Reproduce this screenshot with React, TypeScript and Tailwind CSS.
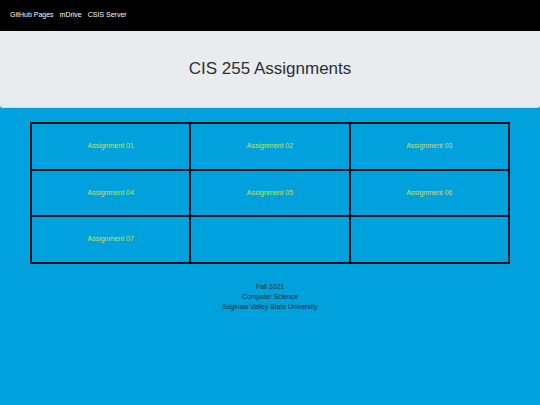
const assignments = [
  "Assignment 01",
  "Assignment 02",
  "Assignment 03",
  "Assignment 04",
  "Assignment 05",
  "Assignment 06",
  "Assignment 07",
  "",
  "",
];

const App = () => {
  return (
    <div className="min-h-[405px] w-full bg-[#00a1dc] font-['Liberation_Sans',Arial,sans-serif]">
      <nav className="flex h-[31px] items-center gap-[6px] bg-black px-[10px] text-[7px] text-white">
        <a>GitHub Pages</a>
        <a>mDrive</a>
        <a>CSIS Server</a>
      </nav>

      <header className="flex h-[77px] items-center justify-center rounded-b-[3px] border-b border-[#b8e6f7] bg-[#e9ecef]">
        <h1 className="text-[17px] text-[#2b2f33]">CIS 255 Assignments</h1>
      </header>

      <div className="px-[30px] pt-[14px]">
        <div className="grid grid-cols-3 gap-[2px] bg-[#0b1620] p-[2px]">
          {assignments.map((name, i) => (
            <div
              key={i}
              className="flex h-[44.5px] items-center justify-center bg-[#00a1dc] text-[7px] text-[#cfe04a]"
            >
              {name}
            </div>
          ))}
        </div>
      </div>

      <footer className="mt-[18px] flex flex-col items-center text-[6.8px] leading-[10px] text-[#14303f]">
        <p>Fall 2021</p>
        <p>Computer Science</p>
        <p>Saginaw Valley State University</p>
      </footer>
    </div>
  );
};

export default App;
